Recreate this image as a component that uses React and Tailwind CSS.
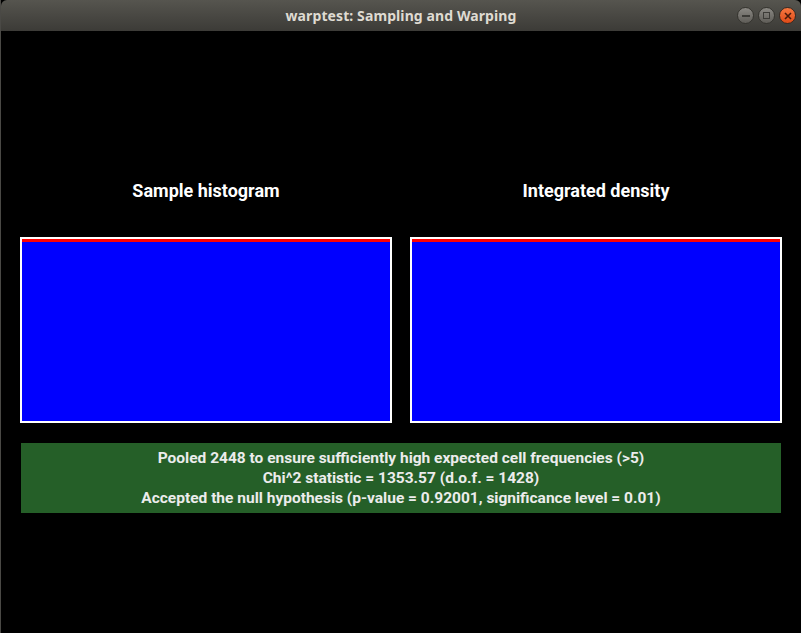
export default function App() {
  const lines = [
    "Pooled 2448 to ensure sufficiently high expected cell frequencies (>5)",
    "Chi^2 statistic = 1353.57 (d.o.f. = 1428)",
    "Accepted the null hypothesis (p-value = 0.92001, significance level = 0.01)",
  ];

  return (
    <div className="w-[801px] h-[633px] bg-black flex flex-col overflow-hidden border-l border-[#4a4945]">
      {/* title bar */}
      <div className="h-[31px] shrink-0 relative flex items-center justify-center rounded-t-[6px] bg-gradient-to-b from-[#56554f] to-[#3c3b37]">
        <span className="text-[14px] font-bold text-[#dfdbd2] tracking-[0.1px]" style={{ fontFamily: '"Noto Sans", sans-serif' }}>
          warptest: Sampling and Warping
        </span>
        <div className="absolute right-[5px] top-[7px] flex gap-[4px]">
          <WinButton>
            <div className="w-[8px] h-[2px] bg-[#3c3b37]" />
          </WinButton>
          <WinButton>
            <div className="w-[7px] h-[7px] border-[1.5px] border-[#3c3b37]" />
          </WinButton>
          <WinButton close>
            <svg width="8" height="8" viewBox="0 0 8 8">
              <path d="M1 1 L7 7 M7 1 L1 7" stroke="#4a1a0a" strokeWidth="1.6" />
            </svg>
          </WinButton>
        </div>
      </div>

      {/* body */}
      <div className="flex flex-col px-[19px] pt-[148px]" style={{ fontFamily: "Roboto, sans-serif" }}>
        <div className="grid grid-cols-2 gap-[18px]">
          <h2 className="text-center text-[18px] leading-[24px] font-bold text-white">Sample histogram</h2>
          <h2 className="text-center text-[18px] leading-[24px] font-bold text-white">Integrated density</h2>
        </div>

        <div className="grid grid-cols-2 gap-[18px] mt-[34px]">
          <Plot />
          <Plot />
        </div>

        <div className="mt-[20px] mx-px bg-[#255f28] pt-[5px] pb-[5px] flex flex-col items-center">
          {lines.map((l) => (
            <p key={l} className="text-[15.5px] leading-[20px] font-bold text-[#ececec] whitespace-nowrap">
              {l}
            </p>
          ))}
        </div>
      </div>
    </div>
  );
}

function WinButton({ children, close }) {
  return (
    <div
      className={
        close
          ? "w-[17px] h-[17px] rounded-full flex items-center justify-center border border-[#3a2a22] bg-gradient-to-b from-[#f6773f] to-[#df4a16]"
          : "w-[17px] h-[17px] rounded-full flex items-center justify-center border border-[#35342f] bg-gradient-to-b from-[#8a8883] to-[#5f5d58]"
      }
    >
      {children}
    </div>
  );
}

function Plot() {
  return (
    <div className="h-[186px] border-2 border-white bg-[#0000ff]">
      <div className="h-[3px] bg-[#ff0000]" />
    </div>
  );
}
